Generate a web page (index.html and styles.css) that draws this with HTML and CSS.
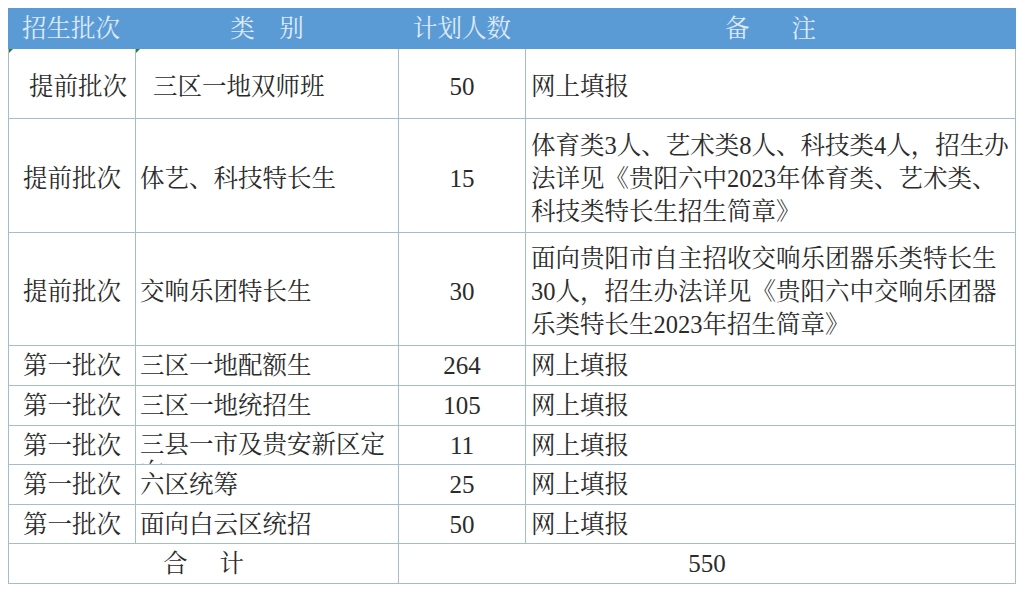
FILE: index.html
```html
<!DOCTYPE html>
<html lang="zh-CN">
<head>
<meta charset="utf-8">
<title>招生计划</title>
<link rel="stylesheet" href="styles.css">
</head>
<body>
<table class="plan">
  <colgroup>
    <col class="c-batch">
    <col class="c-type">
    <col class="c-num">
    <col class="c-note">
  </colgroup>
  <thead>
    <tr class="r-head">
      <th class="h-batch">招生批次</th>
      <th>类　别</th>
      <th>计划人数</th>
      <th>备<span class="gap gap-note"></span>注</th>
    </tr>
  </thead>
  <tbody>
    <tr class="r-70 r-low">
      <td class="batch batch-indent mark">提前批次</td>
      <td class="type type-indent mark">三区一地双师班</td>
      <td class="num">50</td>
      <td class="note">网上填报</td>
    </tr>
    <tr class="r-114 r-low">
      <td class="batch">提前批次</td>
      <td class="type">体艺、科技特长生</td>
      <td class="num">15</td>
      <td class="note">体育类3人、艺术类8人、科技类4人，招生办<br>法详见《贵阳六中2023年体育类、艺术类、<br>科技类特长生招生简章》</td>
    </tr>
    <tr class="r-113 r-low">
      <td class="batch">提前批次</td>
      <td class="type">交响乐团特长生</td>
      <td class="num">30</td>
      <td class="note">面向贵阳市自主招收交响乐团器乐类特长生<br>30人，招生办法详见《贵阳六中交响乐团器<br>乐类特长生2023年招生简章》</td>
    </tr>
    <tr class="r-40">
      <td class="batch">第一批次</td>
      <td class="type">三区一地配额生</td>
      <td class="num">264</td>
      <td class="note">网上填报</td>
    </tr>
    <tr class="r-40">
      <td class="batch">第一批次</td>
      <td class="type">三区一地统招生</td>
      <td class="num">105</td>
      <td class="note">网上填报</td>
    </tr>
    <tr class="r-39">
      <td class="batch">第一批次</td>
      <td class="type type-clip"><div class="clip">三县一市及贵安新区定向</div></td>
      <td class="num">11</td>
      <td class="note">网上填报</td>
    </tr>
    <tr class="r-40">
      <td class="batch">第一批次</td>
      <td class="type">六区统筹</td>
      <td class="num">25</td>
      <td class="note">网上填报</td>
    </tr>
    <tr class="r-39">
      <td class="batch">第一批次</td>
      <td class="type">面向白云区统招</td>
      <td class="num">50</td>
      <td class="note">网上填报</td>
    </tr>
    <tr class="r-40">
      <td class="total" colspan="2">合<span class="gap gap-total"></span>计</td>
      <td class="total num" colspan="2">550</td>
    </tr>
  </tbody>
</table>
</body>
</html>
```

FILE: styles.css
```css
html, body {
  background: #ffffff;
}

body {
  margin: 8px;
  font-family: "Liberation Serif", "Noto Serif CJK SC", "Noto Sans CJK SC", serif;
  font-size: 24.5px;
  color: #2b2b2b;
}

.plan {
  border-collapse: collapse;
  table-layout: fixed;
  width: 1007px;
  border: 1px solid #a3bccf;
}

.c-batch { width: 127px; }
.c-type  { width: 263px; }
.c-num   { width: 127px; }
.c-note  { width: 490px; }

.plan th,
.plan td {
  border: 1px solid #a3bccf;
  padding: 0 4px;
  line-height: 33px;
  vertical-align: middle;
  font-weight: normal;
  white-space: nowrap;
  overflow: hidden;
}

.plan thead th {
  background: #5b9bd5;
  color: #dfeaf6;
  border-color: #5b9bd5;
  text-align: center;
  padding: 0;
}

.plan thead .h-batch {
  padding-right: 2px;
}

.r-head { height: 40px; }
.r-70   { height: 70px; }
.r-114  { height: 114px; }
.r-113  { height: 113px; }
.r-40   { height: 40px; }
.r-39   { height: 39px; }

.plan .r-low td {
  padding-top: 5px;
}

.plan .batch {
  text-align: center;
}

.plan .batch-indent {
  padding-left: 16px;
  padding-right: 4px;
}

.plan .type {
  text-align: left;
  padding-left: 4px;
}

.plan .type-indent {
  padding-left: 17px;
}

.plan .type-clip {
  vertical-align: top;
}

.clip {
  height: 38px;
  box-sizing: border-box;
  padding-top: 5px;
  line-height: 28px;
  white-space: normal;
  overflow: hidden;
}

.plan .num {
  text-align: center;
  font-size: 25px;
}

.plan .note {
  text-align: left;
  padding-left: 5px;
  padding-right: 0;
}

.plan .total {
  text-align: center;
}

.gap {
  display: inline-block;
}

.gap-note  { width: 42px; }
.gap-total { width: 32px; }

.plan .mark {
  position: relative;
}

.mark::before {
  content: "";
  position: absolute;
  left: 0;
  top: 0;
  width: 0;
  height: 0;
  border-top: 4px solid #2e7d3c;
  border-right: 4px solid transparent;
}
```
